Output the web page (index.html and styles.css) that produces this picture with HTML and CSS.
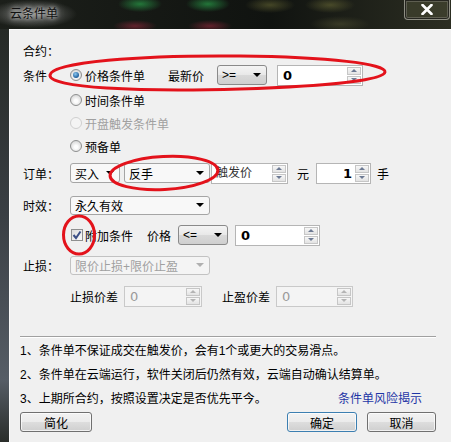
FILE: index.html
```html
<!DOCTYPE html>
<html lang="zh-CN">
<head>
    <meta charset="UTF-8">
    <title>云条件单</title>
    <link rel="stylesheet" href="styles.css">
</head>
<body>
<div class="window">
    <div class="titlebar">
        <span class="title">云条件单</span>
        <div class="close-btn">
            <svg width="14" height="11" viewBox="0 0 14 11"><path d="M2.5 1 L11.5 10 M11.5 1 L2.5 10" stroke="#fff" stroke-width="2.6" stroke-linecap="round"/></svg>
        </div>
    </div>

    <div class="frame">
        <div class="frame-side"></div>
        <div class="content">
            <div class="form">
                <div class="row r-contract"><span class="label">合约：</span></div>

                <div class="row r-cond">
                    <span class="label">条件</span>
                    <span class="radio checked"><i></i>价格条件单</span>
                    <span class="latest">最新价</span>
                    <div class="combo raised op"><span>&gt;=</span><i class="caret"></i></div>
                    <div class="spin cond-val"><span class="val">0</span><span class="arrows"><i class="up"></i><i class="down"></i></span></div>
                </div>

                <div class="row r-radio"><span class="radio indent"><i></i>时间条件单</span></div>
                <div class="row r-radio small"><span class="radio indent disabled"><i></i>开盘触发条件单</span></div>
                <div class="row r-radio"><span class="radio indent"><i></i>预备单</span></div>

                <div class="row r-order">
                    <span class="label">订单：</span>
                    <div class="combo side"><span>买入</span><i class="caret"></i></div>
                    <div class="combo kind"><span>反手</span><i class="caret"></i></div>
                    <div class="spin trigger"><span class="val hint">触发价</span><span class="arrows"><i class="up"></i><i class="down"></i></span></div>
                    <span class="unit yuan">元</span>
                    <div class="spin qty"><span class="val right">1</span><span class="arrows"><i class="up"></i><i class="down"></i></span></div>
                    <span class="unit hand">手</span>
                </div>

                <div class="row r-valid">
                    <span class="label">时效：</span>
                    <div class="combo wide"><span>永久有效</span><i class="caret"></i></div>
                </div>

                <div class="row r-extra">
                    <span class="check indent"><svg width="10" height="10" viewBox="0 0 10 10"><path d="M1.5 5 L4 8 L8.5 1.5" fill="none" stroke="#3b4f86" stroke-width="2"/></svg></span>
                    <span class="extra-text">附加条件</span>
                    <span class="price-text">价格</span>
                    <div class="combo raised op2"><span>&lt;=</span><i class="caret"></i></div>
                    <div class="spin extra-val"><span class="val">0</span><span class="arrows"><i class="up"></i><i class="down"></i></span></div>
                </div>

                <div class="row r-stop">
                    <span class="label">止损：</span>
                    <div class="combo wide disabled"><span>限价止损+限价止盈</span><i class="caret"></i></div>
                </div>

                <div class="row r-diff">
                    <span class="indent">止损价差</span>
                    <div class="spin disabled loss"><span class="val">0</span><span class="arrows"><i class="up"></i><i class="down"></i></span></div>
                    <span class="gain-text">止盈价差</span>
                    <div class="spin disabled gain"><span class="val">0</span><span class="arrows"><i class="up"></i><i class="down"></i></span></div>
                </div>
            </div>

            <div class="separator"></div>

            <div class="notes">
                <div>1、条件单不保证成交在触发价，会有1个或更大的交易滑点。</div>
                <div>2、条件单在云端运行，软件关闭后仍然有效，云端自动确认结算单。</div>
                <div class="note-last"><span>3、上期所合约，按照设置决定是否优先平今。</span><a class="risk-link">条件单风险揭示</a></div>
            </div>

            <div class="footer">
                <button class="btn simple">简化</button>
                <button class="btn ok">确定</button>
                <button class="btn cancel">取消</button>
            </div>
        </div>
    </div>

    <!-- red marker rings drawn over the dialog -->
    <svg class="marks" width="451" height="442" viewBox="0 0 451 442">
        <path d="M50 75 C52 62 140 55 240 56 C330 57 386 64 385 72 C384 80 330 86 240 89 C140 92 48 88 50 75 Z" fill="none" stroke="#e3121b" stroke-width="3"/>
        <ellipse cx="164" cy="173" rx="54" ry="16.5" transform="rotate(-3 164 173)" fill="none" stroke="#e3121b" stroke-width="3"/>
        <ellipse cx="79" cy="235" rx="15.5" ry="19" fill="none" stroke="#e3121b" stroke-width="3"/>
    </svg>
</div>
</body>
</html>
```

FILE: styles.css
```css
* {
    box-sizing: border-box;
}

body {
    margin: 0;
    font-family: "Liberation Sans", "Noto Sans CJK SC", sans-serif;
    font-size: 12px;
    color: #000;
}

/* window frame, blurred aero glass */
.window {
    position: relative;
    width: 451px;
    height: 442px;
    overflow: hidden;
    display: flex;
    flex-direction: column;
    background:
        radial-gradient(ellipse 22px 8px at 140px 4px, rgba(40, 150, 70, 0.75), transparent),
        radial-gradient(ellipse 22px 8px at 208px 4px, rgba(40, 150, 70, 0.75), transparent),
        radial-gradient(ellipse 22px 6px at 135px 26px, rgba(150, 40, 60, 0.6), transparent),
        radial-gradient(ellipse 22px 6px at 210px 26px, rgba(150, 40, 60, 0.6), transparent),
        radial-gradient(ellipse 25px 8px at 270px 5px, rgba(120, 120, 60, 0.5), transparent),
        radial-gradient(ellipse 25px 8px at 330px 5px, rgba(120, 120, 60, 0.5), transparent),
        radial-gradient(ellipse 30px 8px at 340px 24px, rgba(100, 100, 60, 0.4), transparent),
        radial-gradient(ellipse 45px 14px at 32px 14px, rgba(190, 190, 190, 0.55), transparent),
        linear-gradient(90deg, #1c1f1a, #101310 60%, #2c2e22);
}

.titlebar {
    height: 29px;
    flex: none;
    display: flex;
    justify-content: space-between;
    align-items: flex-start;
    padding-left: 10px;
}

.title {
    margin-top: 5px;
    line-height: 18px;
    color: #111;
    text-shadow: 0 0 4px rgba(235, 235, 235, 0.9), 0 0 8px rgba(220, 220, 220, 0.8);
}

.close-btn {
    width: 46px;
    height: 20px;
    margin-right: 1px;
    display: flex;
    align-items: center;
    justify-content: center;
    border: 1px solid rgba(180, 180, 170, 0.7);
    border-top: none;
    border-radius: 0 0 4px 4px;
    box-shadow: inset 0 0 0 1px rgba(0, 0, 0, 0.6), inset 0 0 0 2px rgba(150, 150, 140, 0.4);
    background: rgba(70, 72, 50, 0.6);
}

.frame {
    flex: 1;
    display: flex;
}

.frame-side {
    width: 9px;
    flex: none;
    background: linear-gradient(#262a26, #3a3f44 45%, #565d66 85%, #2a2d2a);
}

.content {
    flex: 1;
    background: #f0f0f0;
    border-top: 1px solid #fafafa;
    border-left: 1px solid #fafafa;
    padding: 8px 15px 0 10px;
}

/* form rows */
.form {
    padding-left: 3px;
}

.row {
    display: flex;
    align-items: center;
}

.r-contract { height: 24px; }
.r-cond { height: 26px; }
.r-radio { height: 24px; }
.r-radio.small { height: 22px; }
.r-order { height: 30px; }
.r-valid { height: 34px; }
.r-extra { height: 26px; }
.r-stop { height: 34px; }
.r-diff { height: 28px; }

.label {
    width: 47px;
    flex: none;
}

.indent {
    margin-left: 47px;
}

/* radio buttons */
.radio {
    display: flex;
    align-items: center;
}

.radio i {
    width: 12px;
    height: 12px;
    margin-right: 3px;
    border: 1px solid #8e8f8f;
    border-radius: 50%;
    background: radial-gradient(circle at 50% 60%, #fdfdfd 20%, #d6d6d6 80%);
    display: flex;
    align-items: center;
    justify-content: center;
}

.radio.checked i::after {
    content: "";
    width: 6px;
    height: 6px;
    border-radius: 50%;
    background: radial-gradient(circle at 40% 35%, #8cc8f0, #1d5d9a 70%);
}

.radio.disabled {
    color: #a0a0a0;
}

.radio.disabled i {
    border-color: #cfcfcf;
    background: #f4f4f4;
}

.latest { margin-left: 23px; }

/* combo boxes */
.combo {
    height: 20px;
    display: flex;
    align-items: center;
    justify-content: space-between;
    padding: 0 5px 0 4px;
    border: 1px solid #a5a5a5;
    border-radius: 3px;
    background: #f8f8f8;
}

.combo.raised {
    border-color: #8a8a8a;
    background: linear-gradient(#f4f4f4, #e8e8e8 50%, #d9d9d9 51%, #cfcfcf);
}

.caret {
    width: 0;
    height: 0;
    border-left: 4px solid transparent;
    border-right: 4px solid transparent;
    border-top: 4px solid #000;
}

.combo.disabled {
    color: #a0a0a0;
    border-color: #c2c2c2;
    background: #f4f4f4;
}

.combo.disabled .caret {
    border-top-color: #b0b0b0;
}

.op { width: 50px; margin-left: 13px; }
.op2 { width: 50px; margin-left: 7px; }
.side { width: 50px; }
.kind { width: 86px; margin-left: 4px; }
.wide { width: 140px; height: 19px; }

/* spin inputs */
.spin {
    height: 21px;
    display: flex;
    border: 1px solid #b5b5b5;
    background: #fff;
}

.spin .val {
    flex: 1;
    padding-left: 5px;
    font-family: "DejaVu Sans", sans-serif;
    font-weight: bold;
    font-size: 13px;
    line-height: 19px;
}

.spin .val.hint {
    font-family: "Liberation Sans", "Noto Sans CJK SC", sans-serif;
    font-weight: normal;
    font-size: 12px;
    color: #333;
    padding-left: 4px;
}

.spin .val.right {
    text-align: right;
    padding-right: 2px;
}

.arrows {
    width: 16px;
    display: flex;
    flex-direction: column;
    gap: 1px;
    padding: 1px;
}

.arrows i {
    flex: 1;
    display: flex;
    align-items: center;
    justify-content: center;
    border: 1px solid #c6c6c6;
    background: linear-gradient(#f7f7f7, #e3e3e3);
}

.arrows .up::after {
    content: "";
    border-left: 3px solid transparent;
    border-right: 3px solid transparent;
    border-bottom: 3px solid #6d7a93;
}

.arrows .down::after {
    content: "";
    border-left: 3px solid transparent;
    border-right: 3px solid transparent;
    border-top: 3px solid #6d7a93;
}

.spin.disabled {
    border-color: #c9c9c9;
    background: #f4f4f4;
}

.spin.disabled .val {
    font-weight: normal;
    color: #9a9a9a;
}

.spin.disabled .arrows .up::after { border-bottom-color: #b4b4b4; }
.spin.disabled .arrows .down::after { border-top-color: #b4b4b4; }

.cond-val { width: 86px; margin-left: 10px; }
.trigger { width: 77px; margin-left: 1px; }
.qty { width: 55px; margin-left: 7px; }
.extra-val { width: 85px; margin-left: 7px; }
.loss { width: 78px; margin-left: 6px; }
.gain { width: 77px; margin-left: 6px; }

.yuan { margin-left: 9px; }
.hand { margin-left: 6px; }

/* checkbox */
.check {
    width: 12px;
    height: 12px;
    margin-left: 48px;
    border: 1px solid #8e8f8f;
    background: linear-gradient(135deg, #dcdcdc, #fbfbfb);
    display: flex;
    align-items: center;
    justify-content: center;
}

.extra-text { margin-left: 2px; }
.price-text { margin-left: 14px; }
.gain-text { margin-left: 20px; }

/* bottom part */
.separator {
    margin-top: 26px;
    border-top: 1px solid #a0a0a0;
    border-bottom: 1px solid #fff;
}

.notes {
    margin-top: 1px;
    line-height: 24px;
}

.note-last {
    display: flex;
    justify-content: space-between;
}

.risk-link {
    margin-right: 14px;
    color: #1f36a6;
}

.footer {
    margin-top: 1px;
    display: flex;
}

.btn {
    height: 20px;
    padding: 0;
    font-family: "Liberation Sans", "Noto Sans CJK SC", sans-serif;
    font-size: 12px;
    color: #000;
    border: 1px solid #707070;
    border-radius: 3px;
    background: linear-gradient(#f2f2f2, #ebebeb 50%, #dddddd 51%, #cfcfcf);
    box-shadow: inset 0 0 0 1px rgba(255, 255, 255, 0.7);
}

.simple { width: 72px; }
.ok { width: 70px; margin-left: auto; border-color: #3c7fb1; }
.cancel { width: 69px; margin-left: 10px; }

/* red marker rings */
.marks {
    position: absolute;
    top: 0;
    left: 0;
    pointer-events: none;
}
```
